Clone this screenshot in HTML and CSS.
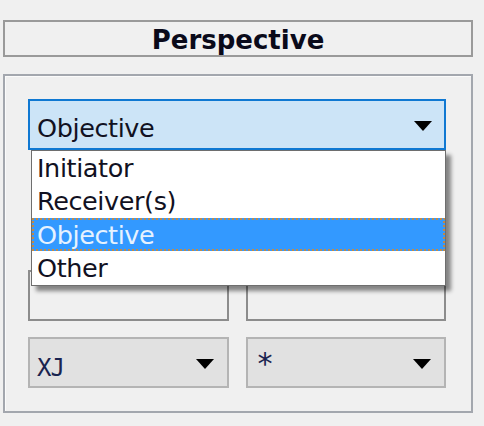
FILE: index.html
```html
<!DOCTYPE html>
<html>
<head>
<meta charset="utf-8">
<link rel="stylesheet" href="styles.css">
</head>
<body>
<div class="page">
  <div class="header">Perspective</div>
  <div class="group">
    <div class="combo-wrap">
      <div class="combo combo-focus">
        <span class="combo-text">Objective</span>
        <span class="arrow"></span>
      </div>
      <ul class="list">
        <li class="item">Initiator</li>
        <li class="item item-b">Receiver(s)</li>
        <li class="item item-sel">Objective</li>
        <li class="item item-b">Other</li>
      </ul>
    </div>
    <div class="row row-text">
      <div class="textbox"></div>
      <div class="textbox"></div>
    </div>
    <div class="row row-combos">
      <div class="combo combo-plain">
        <span class="combo-text mono">XJ</span>
        <span class="arrow"></span>
      </div>
      <div class="combo combo-plain">
        <span class="combo-text mono star">*</span>
        <span class="arrow"></span>
      </div>
    </div>
  </div>
</div>
</body>
</html>
```
FILE: styles.css
```css
html, body {
  margin: 0;
  padding: 0;
  background: #f0f0f0;
}
body {
  width: 484px;
  height: 426px;
  overflow: hidden;
  font-family: "DejaVu Sans", Verdana, sans-serif;
  color: #111122;
}
.page {
  padding: 20px 11px 0 3px;
}
.header {
  box-sizing: border-box;
  height: 37px;
  border: 2px solid #9a9a9a;
  font-weight: bold;
  font-size: 26px;
  line-height: 29px;
  padding-top: 4px;
  text-align: center;
  color: #0a0a1a;
}
.group {
  box-sizing: border-box;
  margin-top: 17px;
  height: 339px;
  border: 2px solid #a3a7ae;
  box-shadow: inset 1px 1px 0 #fbfbfb;
  padding: 23px 25px 0 23px;
}
.combo-wrap {
  position: relative;
}
.combo {
  box-sizing: border-box;
  height: 51px;
  display: flex;
  align-items: center;
  justify-content: space-between;
  padding: 0 12px 0 7px;
}
.combo-focus {
  border: 2px solid #0f78d2;
  background: #cce4f7;
}
.combo-plain {
  border: 2px solid #b4b4b4;
  background: #e1e1e1;
  flex: 0 0 201px;
  padding-right: 13px;
}
.combo-plain + .combo-plain {
  flex-basis: 200px;
}
.combo-text {
  font-size: 25.5px;
  letter-spacing: -0.4px;
  line-height: 30px;
  padding-top: 7px;
}
.mono {
  font-family: "DejaVu Sans Mono", monospace;
  font-size: 24px;
  letter-spacing: -1px;
  padding-top: 10px;
  color: #1a2450;
}
.star {
  font-size: 30px;
  padding-top: 2px;
  margin-left: 1px;
}
.arrow {
  width: 0;
  height: 0;
  border-left: 9.5px solid transparent;
  border-right: 9.5px solid transparent;
  border-top: 10px solid #000;
  margin-top: 2px;
}
.list {
  position: absolute;
  left: 3px;
  right: 0;
  top: 51px;
  margin: 0;
  padding: 0;
  list-style: none;
  background: #fff;
  border: 1px solid #6e6e6e;
  box-shadow: 5px 5px 4px rgba(0, 0, 0, 0.45);
  z-index: 2;
}
.item {
  box-sizing: border-box;
  height: 33px;
  font-size: 25.5px;
  letter-spacing: -0.4px;
  line-height: 31px;
  padding-top: 2px;
  padding-left: 5px;
  overflow: hidden;
}
.item-b {
  height: 34px;
}
.item-sel {
  color: #e6f2ff;
  background:
    repeating-linear-gradient(90deg, #c08a48 0 2px, transparent 2px 4px) top left / 100% 2px no-repeat,
    repeating-linear-gradient(90deg, #c08a48 0 2px, transparent 2px 4px) bottom left / 100% 2px no-repeat,
    repeating-linear-gradient(0deg, #c08a48 0 2px, transparent 2px 4px) top left / 2px 100% no-repeat,
    repeating-linear-gradient(0deg, #c08a48 0 2px, transparent 2px 4px) top right / 2px 100% no-repeat,
    #3399ff;
}
.row {
  display: flex;
  justify-content: space-between;
}
.row-text {
  margin-top: 120px;
}
.textbox {
  box-sizing: border-box;
  height: 51px;
  flex: 0 0 201px;
  border: 2px solid #8c8c8c;
  background: #f0f0f0;
}
.textbox + .textbox {
  flex-basis: 200px;
}
.row-combos {
  margin-top: 16px;
}
```
